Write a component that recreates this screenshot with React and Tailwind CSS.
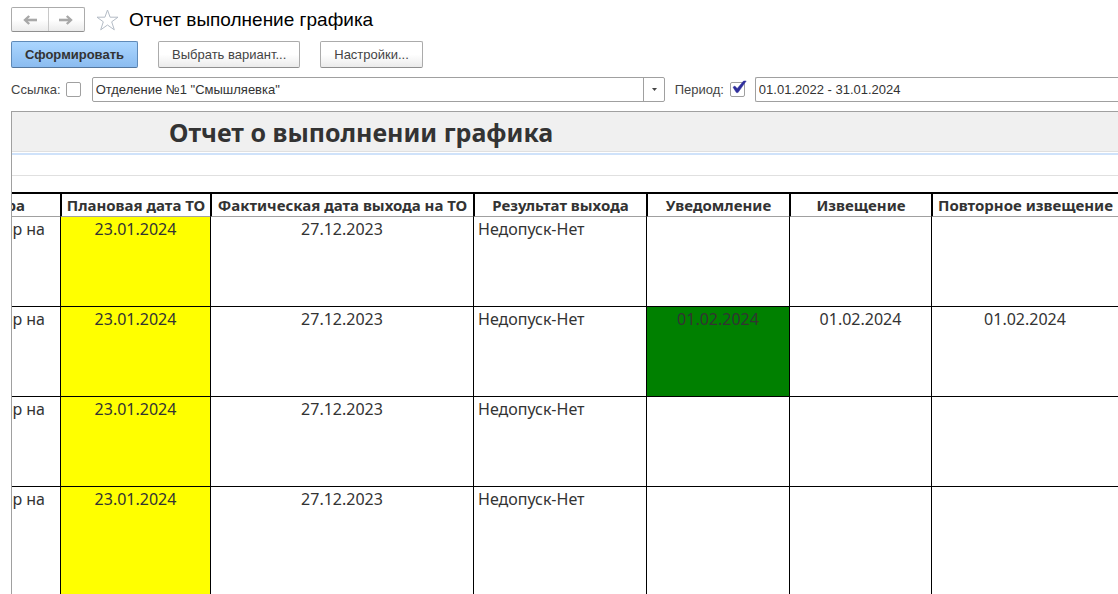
import { useState } from 'react'

const columns = [
  { title: 'ра', width: 'w-[48px]' },
  { title: 'Плановая дата ТО', width: 'w-[150px]' },
  { title: 'Фактическая дата выхода на ТО', width: 'w-[263px]' },
  { title: 'Результат выхода', width: 'w-[173px]' },
  { title: 'Уведомление', width: 'w-[143px]' },
  { title: 'Извещение', width: 'w-[142px]' },
  { title: 'Повторное извещение', width: 'w-auto' },
]

const rows = [
  { planned: '23.01.2024', actual: '27.12.2023', result: 'Недопуск-Нет' },
  {
    planned: '23.01.2024', actual: '27.12.2023', result: 'Недопуск-Нет',
    notice: '01.02.2024', letter: '01.02.2024', repeat: '01.02.2024',
  },
  { planned: '23.01.2024', actual: '27.12.2023', result: 'Недопуск-Нет' },
  { planned: '23.01.2024', actual: '27.12.2023', result: 'Недопуск-Нет', tall: true },
]

function Arrow({ flip }) {
  return (
    <svg width="14" height="10" viewBox="0 0 14 10" className={flip ? 'rotate-180' : ''} aria-hidden="true">
      <path d="M6.2 1 2 5l4.2 4" fill="none" stroke="#a8a8a8" strokeWidth="2.4" />
      <path d="M2.5 5H14" stroke="#a8a8a8" strokeWidth="2.6" />
    </svg>
  )
}

function ToolButton({ children, primary }) {
  return (
    <button
      className={primary
        ? 'h-[27px] px-[13px] rounded-xs border border-[#5f8ab8] border-b-[#54779e] bg-linear-to-b from-[#abd6ff] to-[#8bbcf0] font-bold text-[#333]'
        : 'h-[27px] px-[13px] rounded-xs border border-[#ababab] border-b-[#8f8f8f] bg-linear-to-b from-white from-50% to-[#ebebeb] text-[#444]'}
    >
      {children}
    </button>
  )
}

function CheckBox({ id, checked, onChange }) {
  return (
    <span className="relative flex">
      <input
        id={id}
        type="checkbox"
        checked={checked}
        onChange={e => onChange(e.target.checked)}
        className="size-[15px] appearance-none rounded-xs border border-[#a0a0a0] bg-white"
      />
      {checked && (
        <svg className="absolute left-0 -top-1 pointer-events-none" width="17" height="17" viewBox="0 0 17 17" aria-hidden="true">
          <path d="M3 9.2 4.8 8 7.2 10.6 13.6 3H16.2L8 14.6H6.4Z" fill="#2f2f9c" stroke="#2f2f9c" strokeWidth="0.5" />
        </svg>
      )}
    </span>
  )
}

function Cell({ children, className = '' }) {
  return (
    <td className={`border-l border-b border-black p-0 pt-px align-top ${className}`}>{children}</td>
  )
}

export default function App() {
  const [useLink, setUseLink] = useState(false)
  const [usePeriod, setUsePeriod] = useState(true)
  const [period, setPeriod] = useState('01.01.2022 - 31.01.2024')

  return (
    <div className="h-screen flex flex-col overflow-hidden bg-white pl-[11px] font-['Liberation_Sans',Arial,sans-serif] text-[13px] text-[#444]">
      {/* Title row */}
      <header className="flex items-center pt-[7px]">
        <div className="flex h-[25px] w-[74px] rounded-xs border border-[#ababab] border-b-[#8f8f8f] bg-linear-to-b from-white from-50% to-[#ebebeb]">
          <button aria-label="Назад" className="flex-1 flex items-center justify-center border-r border-[#c8c8c8]"><Arrow /></button>
          <button aria-label="Вперед" className="flex-1 flex items-center justify-center"><Arrow flip /></button>
        </div>
        <button aria-label="В избранное" className="ml-[11px]">
          <svg width="23" height="22" viewBox="0 0 23 22" aria-hidden="true">
            <path d="M11.5 1 14.1 8.2H22L15.7 12.8 18.3 20.8 11.5 16 4.7 20.8 7.3 12.8 1 8.2H8.9Z" fill="none" stroke="#b4bcc6" />
          </svg>
        </button>
        <h1 className="ml-[10px] text-[19px] leading-6 text-black">Отчет выполнение графика</h1>
      </header>

      {/* Commands */}
      <div className="flex gap-5 pt-[9px]">
        <ToolButton primary>Сформировать</ToolButton>
        <ToolButton>Выбрать вариант...</ToolButton>
        <ToolButton>Настройки...</ToolButton>
      </div>

      {/* Filters */}
      <div className="flex items-center pt-[9px]">
        <label htmlFor="use-link" className="mr-[5px]">Ссылка:</label>
        <CheckBox id="use-link" checked={useLink} onChange={setUseLink} />
        <div className="relative ml-[11px] w-[573px]">
          <select aria-label="Ссылка" className="block h-[25px] w-full appearance-none rounded-xs border border-[#a0a0a0] bg-white px-[3px] text-[#333]">
            <option>Отделение №1 "Смышляевка"</option>
          </select>
          <span className="absolute right-0 top-0 flex h-[25px] w-[22px] items-center justify-center border-l border-[#a0a0a0] pointer-events-none">
            <svg width="5" height="3" viewBox="0 0 5 3" aria-hidden="true"><path d="M0 0h5L2.5 3Z" fill="#444" /></svg>
          </span>
        </div>
        <label htmlFor="use-period" className="ml-[10px] mr-[6px]">Период:</label>
        <CheckBox id="use-period" checked={usePeriod} onChange={setUsePeriod} />
        <input
          aria-label="Период"
          value={period}
          onChange={e => setPeriod(e.target.value)}
          className="ml-[10px] h-[25px] min-w-0 flex-1 rounded-l-xs border border-r-0 border-[#a0a0a0] bg-white px-[3px] text-[#333]"
        />
      </div>

      {/* Report sheet */}
      <main className="mt-[9px] flex-1 overflow-hidden border-t border-l border-[#a0a0a0] font-['Noto_Sans',sans-serif] text-[16px] leading-[22px] text-[#333]">
        <div className="h-10 border-b border-[#e0e0e0] bg-[#f0f0f0] pl-[157px]">
          <h2 className="text-[25px] leading-10 font-bold">Отчет о выполнении графика</h2>
        </div>
        <div className="mt-px h-[23px] border-t-2 border-b border-t-[#cfe2fa] border-b-[#e0e0e0]" />
        <table className="mt-4 w-full table-fixed border-separate border-spacing-0">
          <thead>
            <tr>
              {columns.map((col, i) => (
                <th
                  key={col.title}
                  className={`${col.width} h-[25px] border-t-2 border-b border-t-black border-b-[#a0a0a0] p-0 text-[15px] whitespace-nowrap ${i > 0 ? 'border-l-2 border-l-black' : ''}`}
                >
                  {i > 0 ? col.title : <div className="flex justify-end overflow-hidden pr-[35px]">{col.title}</div>}
                </th>
              ))}
            </tr>
          </thead>
          <tbody>
            {rows.map((row, i) => (
              <tr key={i} className={row.tall ? 'h-[120px] text-center' : 'h-[90px] text-center'}>
                <td className="border-b border-black p-0 pt-px align-top">
                  <div className="flex justify-end overflow-hidden pr-[15px] whitespace-nowrap">ор на</div>
                </td>
                <Cell className="bg-[#ff0]">{row.planned}</Cell>
                <Cell>{row.actual}</Cell>
                <Cell className="pl-1 text-left">{row.result}</Cell>
                <Cell className={row.notice ? 'bg-[#008000]' : ''}>{row.notice}</Cell>
                <Cell>{row.letter}</Cell>
                <Cell>{row.repeat}</Cell>
              </tr>
            ))}
          </tbody>
        </table>
      </main>
    </div>
  )
}
